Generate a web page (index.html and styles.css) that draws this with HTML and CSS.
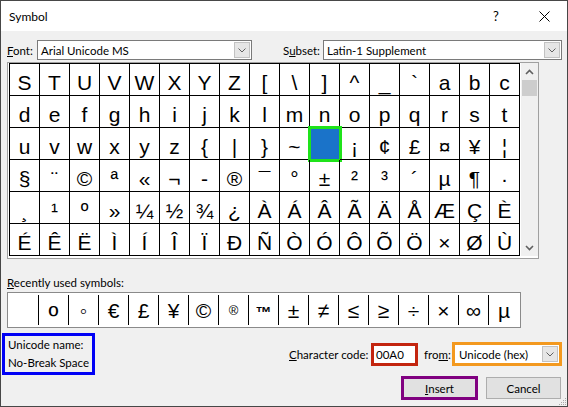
FILE: index.html
```html
<!DOCTYPE html>
<html>
<head>
<meta charset="utf-8">
<link rel="stylesheet" href="styles.css">
</head>
<body>
<div class="window">
  <div class="titlebar">
    <span class="title">Symbol</span>
    <span class="tbtn help">?</span>
    <span class="tbtn close"><svg width="11" height="11" viewBox="0 0 11 11"><path d="M0.5 0.5 L10.5 10.5 M10.5 0.5 L0.5 10.5" stroke="#000" stroke-width="1" fill="none"/></svg></span>
  </div>
  <div class="main">
    <div class="fontrow">
      <span class="lbl lbl-font"><u>F</u>ont:</span>
      <div class="combo combo-font"><span class="ctext">Arial Unicode MS</span><span class="drop"><svg width="8" height="5" viewBox="0 0 8 5"><path d="M0.5 0.5 L4 4 L7.5 0.5" stroke="#606060" fill="none"/></svg></span></div>
      <span class="lbl lbl-subset">S<u>u</u>bset:</span>
      <div class="combo combo-subset"><span class="ctext">Latin-1 Supplement</span><span class="drop"><svg width="8" height="5" viewBox="0 0 8 5"><path d="M0.5 0.5 L4 4 L7.5 0.5" stroke="#606060" fill="none"/></svg></span></div>
    </div>
    <div class="charbox">
      <div class="chargrid">
        <div class="cell">S</div><div class="cell">T</div><div class="cell">U</div><div class="cell">V</div><div class="cell">W</div><div class="cell">X</div><div class="cell">Y</div><div class="cell">Z</div><div class="cell">[</div><div class="cell">\</div><div class="cell">]</div><div class="cell">^</div><div class="cell">_</div><div class="cell">`</div><div class="cell">a</div><div class="cell">b</div><div class="cell">c</div>
        <div class="cell">d</div><div class="cell">e</div><div class="cell">f</div><div class="cell">g</div><div class="cell">h</div><div class="cell">i</div><div class="cell">j</div><div class="cell">k</div><div class="cell">l</div><div class="cell">m</div><div class="cell">n</div><div class="cell">o</div><div class="cell">p</div><div class="cell">q</div><div class="cell">r</div><div class="cell">s</div><div class="cell">t</div>
        <div class="cell">u</div><div class="cell">v</div><div class="cell">w</div><div class="cell">x</div><div class="cell">y</div><div class="cell">z</div><div class="cell">{</div><div class="cell">|</div><div class="cell">}</div><div class="cell">~</div><div class="cell sel">&nbsp;</div><div class="cell">¡</div><div class="cell">¢</div><div class="cell">£</div><div class="cell">¤</div><div class="cell">¥</div><div class="cell">¦</div>
        <div class="cell">§</div><div class="cell">¨</div><div class="cell">©</div><div class="cell">ª</div><div class="cell">«</div><div class="cell">¬</div><div class="cell">-</div><div class="cell">®</div><div class="cell">¯</div><div class="cell">°</div><div class="cell">±</div><div class="cell">²</div><div class="cell">³</div><div class="cell">´</div><div class="cell">µ</div><div class="cell">¶</div><div class="cell">·</div>
        <div class="cell">¸</div><div class="cell">¹</div><div class="cell">º</div><div class="cell">»</div><div class="cell">¼</div><div class="cell">½</div><div class="cell">¾</div><div class="cell">¿</div><div class="cell">À</div><div class="cell">Á</div><div class="cell">Â</div><div class="cell">Ã</div><div class="cell">Ä</div><div class="cell">Å</div><div class="cell">Æ</div><div class="cell">Ç</div><div class="cell">È</div>
        <div class="cell">É</div><div class="cell">Ê</div><div class="cell">Ë</div><div class="cell">Ì</div><div class="cell">Í</div><div class="cell">Î</div><div class="cell">Ï</div><div class="cell">Ð</div><div class="cell">Ñ</div><div class="cell">Ò</div><div class="cell">Ó</div><div class="cell">Ô</div><div class="cell">Õ</div><div class="cell">Ö</div><div class="cell">×</div><div class="cell">Ø</div><div class="cell">Ù</div>
      </div>
      <div class="scrollbar">
        <div class="sbtn"><svg width="9" height="6" viewBox="0 0 9 6"><path d="M1 5 L4.5 1.5 L8 5" stroke="#606060" stroke-width="1.6" fill="none"/></svg></div>
        <div class="thumb"></div>
        <div class="track"></div>
        <div class="sbtn"><svg width="9" height="6" viewBox="0 0 9 6"><path d="M1 1 L4.5 4.5 L8 1" stroke="#606060" stroke-width="1.6" fill="none"/></svg></div>
      </div>
    </div>
    <div class="recent-label"><u>R</u>ecently used symbols:</div>
    <div class="recent">
      <div class="rcell">&nbsp;</div><div class="rcell"><span class="ord">º</span></div><div class="rcell">◦</div><div class="rcell">€</div><div class="rcell">£</div><div class="rcell">¥</div><div class="rcell">©</div><div class="rcell"><span class="sup">®</span></div><div class="rcell"><span class="tm">™</span></div><div class="rcell">±</div><div class="rcell">≠</div><div class="rcell">≤</div><div class="rcell">≥</div><div class="rcell">÷</div><div class="rcell">×</div><div class="rcell">∞</div><div class="rcell">µ</div>
    </div>
    <div class="bottom">
      <div class="uname">Unicode name:<br>No-Break Space</div>
      <div class="controls">
        <div class="coderow">
          <span class="lbl lbl-code"><u>C</u>haracter code:</span>
          <div class="codebox">00A0</div>
          <span class="lbl lbl-from">fro<u>m</u>:</span>
          <div class="fromcombo"><span class="ctext">Unicode (hex)</span><span class="drop"><svg width="8" height="5" viewBox="0 0 8 5"><path d="M0.5 0.5 L4 4 L7.5 0.5" stroke="#606060" fill="none"/></svg></span></div>
        </div>
        <div class="buttons">
          <div class="btn insert"><u>I</u>nsert</div>
          <div class="btn cancel">Cancel</div>
        </div>
      </div>
    </div>
  </div>
  <svg class="grip" width="10" height="10" viewBox="0 0 10 10"><g fill="#a8a8a8"><rect x="8" y="2" width="1" height="1"/><rect x="6" y="4" width="1" height="1"/><rect x="8" y="4" width="1" height="1"/><rect x="4" y="6" width="1" height="1"/><rect x="6" y="6" width="1" height="1"/><rect x="8" y="6" width="1" height="1"/><rect x="2" y="8" width="1" height="1"/><rect x="4" y="8" width="1" height="1"/><rect x="6" y="8" width="1" height="1"/><rect x="8" y="8" width="1" height="1"/></g></svg>
</div>
</body>
</html>
```

FILE: styles.css
```css
html, body {
  margin: 0;
  padding: 0;
}
body {
  width: 568px;
  height: 407px;
  overflow: hidden;
  font-family: Lato, "Liberation Sans", sans-serif;
  font-size: 11.5px;
  color: #000;
}
.window {
  box-sizing: border-box;
  width: 568px;
  height: 407px;
  border: 1px solid #474747;
  background: #f0f0f0;
  position: relative;
}
.titlebar {
  height: 30px;
  background: #fff;
  display: flex;
  align-items: center;
  font-size: 12px;
}
.title {
  padding-left: 8px;
  flex: 1;
}
.tbtn {
  width: 46px;
  height: 30px;
  display: flex;
  align-items: center;
  justify-content: center;
}
.help {
  font-size: 13px;
  padding-right: 4px;
  box-sizing: border-box;
}
.close svg {
  display: block;
}
.main {
  padding: 9px 5px 0 6px;
}
.fontrow {
  display: flex;
  align-items: center;
  height: 20px;
}
.lbl-font {
  width: 30px;
}
.lbl-subset {
  margin-left: 31px;
  width: 40px;
}
.combo {
  box-sizing: border-box;
  height: 20px;
  border: 1px solid #7a7a7a;
  background: #fff;
  display: flex;
  align-items: center;
}
.combo-font {
  width: 215px;
}
.combo-subset {
  width: 239px;
}
.ctext {
  padding-left: 3px;
  flex: 1;
  white-space: nowrap;
}
.drop {
  box-sizing: border-box;
  width: 16px;
  height: 16px;
  margin-right: 1px;
  border: 1px solid #c2c2c2;
  background: #e6e6e6;
  display: flex;
  align-items: center;
  justify-content: center;
}
.drop svg {
  display: block;
}
.charbox {
  margin-top: 2px;
  display: flex;
  width: max-content;
  border: 1px solid #a0a0a0;
  background: #fff;
  padding: 0 0 2px 1px;
}
.chargrid {
  display: grid;
  grid-template-columns: repeat(17, 30px);
  grid-auto-rows: 32px;
  border-left: 1px solid #000;
  border-top: 1px solid #000;
}
.cell {
  box-sizing: border-box;
  border-right: 1px solid #000;
  border-bottom: 1px solid #000;
  font-family: "Liberation Sans", Arial, sans-serif;
  font-size: 21px;
  line-height: 38px;
  height: 32px;
  text-align: center;
  white-space: nowrap;
}
.cell.sel {
  background: #1a73c9;
  outline: 3px solid #1fe31a;
  outline-offset: -1px;
}
.scrollbar {
  width: 17px;
  margin-left: 1px;
  background: #f0f0f0;
  display: flex;
  flex-direction: column;
}
.sbtn {
  height: 17px;
  display: flex;
  align-items: center;
  justify-content: center;
}
.sbtn svg {
  display: block;
}
.thumb {
  height: 16px;
  margin: 0 1px;
  background: #cdcdcd;
}
.track {
  flex: 1;
}
.recent-label {
  margin-top: 16px;
  line-height: 16px;
}
.recent {
  margin-top: 1px;
  display: flex;
  width: max-content;
  border: 1px solid #8a8a8a;
  background: #fff;
  padding: 2px 1px;
}
.rcell {
  box-sizing: border-box;
  width: 30px;
  height: 30px;
  border-right: 1px solid #000;
  font-family: "Liberation Sans", Arial, sans-serif;
  font-size: 21px;
  line-height: 32px;
  text-align: center;
  white-space: nowrap;
}
.rcell:last-child {
  border-right: none;
}
.ord {
  font-size: 27px;
  line-height: 20px;
  vertical-align: -7px;
}
.sup {
  font-size: 13px;
  vertical-align: 8px;
}
.tm {
  font-size: 16px;
  font-weight: bold;
}
.bottom {
  display: flex;
  align-items: flex-start;
  margin-top: 5px;
}
.uname {
  box-sizing: border-box;
  margin-left: -5px;
  width: 93px;
  height: 42px;
  border: 3px solid #0000f5;
  padding: 0 0 0 3px;
  line-height: 18px;
  white-space: nowrap;
}
.controls {
  margin-left: auto;
  display: flex;
  flex-direction: column;
  align-items: flex-end;
}
.coderow {
  display: flex;
  align-items: center;
  margin-top: 9px;
}
.lbl-code {
  width: 82px;
  white-space: nowrap;
}
.codebox {
  box-sizing: border-box;
  width: 47px;
  height: 23px;
  border: 3px solid #c3250f;
  background: #fff;
  padding-left: 2px;
  line-height: 17px;
}
.lbl-from {
  margin-left: 6px;
  width: 28px;
}
.fromcombo {
  box-sizing: border-box;
  width: 110px;
  height: 24px;
  border: 3px solid #f3991f;
  background: #fff;
  display: flex;
  align-items: center;
}
.fromcombo .ctext {
  padding-left: 4px;
}
.fromcombo .drop {
  margin-right: 1px;
}
.buttons {
  display: flex;
  align-items: center;
  margin-top: 10px;
}
.btn {
  box-sizing: border-box;
  background: #e1e1e1;
  display: flex;
  align-items: center;
  justify-content: center;
}
.insert {
  width: 77px;
  height: 24px;
  border: 3px solid #800080;
}
.cancel {
  width: 75px;
  height: 22px;
  margin-left: 8px;
  margin-right: 1px;
  border: 1px solid #adadad;
}
.grip {
  position: absolute;
  right: 0;
  bottom: 0;
}
```
